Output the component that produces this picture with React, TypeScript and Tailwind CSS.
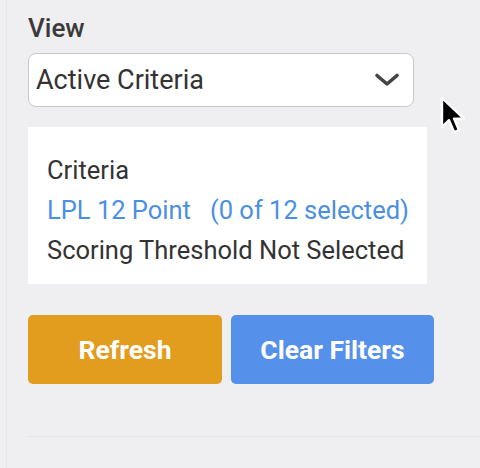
const Cursor = () => (
    <svg className="absolute left-[439px] top-[95px] h-[40px] w-[28px]" viewBox="0 0 14 20">
        <path d="M1.5 1.5 L1.5 16 L5 12.6 L7.6 18.6 L10 17.6 L7.5 11.8 L12.4 11.8 Z" fill="#000" stroke="#fff" strokeWidth="1.2" strokeLinejoin="round" />
    </svg>
);

const Chevron = () => (
    <svg className="h-[16px] w-[28px]" viewBox="0 0 28 16" fill="none">
        <path d="M4 3.5 L14 12 L24 3.5" stroke="#444" strokeWidth="3.6" strokeLinecap="round" strokeLinejoin="round" />
    </svg>
);

const App = () => {
    return (
        <div className="relative h-[468px] w-[480px] overflow-hidden bg-[#efeef1] font-['Roboto',sans-serif] text-[#333]">
            <div className="ml-[6px] h-full border-l border-[#e6e5e8] pl-[21px] pt-[13px]">
                <p className="text-[26px] leading-[30px] font-medium text-[#3a3a3a]">View</p>
                <div className="mt-[10px] flex h-[54px] w-[386px] items-center justify-between rounded-[8px] border border-[#c9c8cc] bg-white pl-[7px] pr-[12px]">
                    <span className="text-[27px] leading-[30px]">Active Criteria</span>
                    <Chevron />
                </div>
                <div className="mt-[20px] w-[399px] bg-white pl-[19px] pt-[23px] pb-[14px] text-[25.5px] leading-[40px]">
                    <p>Criteria</p>
                    <p className="text-[#4a8fe3]">
                        LPL 12 Point<span className="ml-[19px]">(0 of 12 selected)</span>
                    </p>
                    <p>Scoring Threshold Not Selected</p>
                </div>
                <div className="mt-[31px] flex gap-[9px]">
                    <button className="h-[69px] w-[194px] rounded-[5px] bg-[#e29c1e] text-[26.5px] font-bold text-white">Refresh</button>
                    <button className="h-[69px] w-[203px] rounded-[5px] bg-[#5591ea] text-[26.5px] font-bold text-white">Clear Filters</button>
                </div>
                <div className="mt-[52px] border-t border-[#e4e3e6]" />
            </div>
            <Cursor />
        </div>
    );
};

export default App;
